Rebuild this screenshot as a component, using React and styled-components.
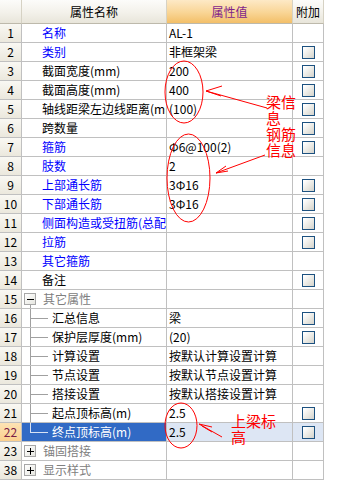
import styled, { createGlobalStyle } from "styled-components";

const GlobalStyle = createGlobalStyle`
  body {
    margin: 0;
    background: #ffffff;
    font-family: "Noto Sans CJK SC", "DejaVu Sans", sans-serif;
  }
`;

const rows = [
  { n: 1, name: "名称", blue: true, value: "AL-1" },
  { n: 2, name: "类别", blue: true, value: "非框架梁", check: true },
  { n: 3, name: "截面宽度(mm)", value: "200", check: true },
  { n: 4, name: "截面高度(mm)", value: "400", check: true },
  { n: 5, name: "轴线距梁左边线距离(mm)", value: "(100)", check: true },
  { n: 6, name: "跨数量", value: "", check: true },
  { n: 7, name: "箍筋", blue: true, value: "Φ6@100(2)", check: true },
  { n: 8, name: "肢数", blue: true, value: "2" },
  { n: 9, name: "上部通长筋", blue: true, value: "3Φ16", check: true },
  { n: 10, name: "下部通长筋", blue: true, value: "3Φ16", check: true },
  { n: 11, name: "侧面构造或受扭筋(总配筋值)", blue: true, value: "", check: true },
  { n: 12, name: "拉筋", blue: true, value: "", check: true },
  { n: 13, name: "其它箍筋", blue: true, value: "" },
  { n: 14, name: "备注", value: "", check: true },
  { n: 15, name: "其它属性", group: "open" },
  { n: 16, name: "汇总信息", child: true, value: "梁", check: true },
  { n: 17, name: "保护层厚度(mm)", child: true, value: "(20)", check: true },
  { n: 18, name: "计算设置", child: true, value: "按默认计算设置计算" },
  { n: 19, name: "节点设置", child: true, value: "按默认节点设置计算" },
  { n: 20, name: "搭接设置", child: true, value: "按默认搭接设置计算" },
  { n: 21, name: "起点顶标高(m)", child: true, value: "2.5", check: true },
  { n: 22, name: "终点顶标高(m)", child: true, last: true, value: "2.5", check: true, active: true },
  { n: 23, name: "锚固搭接", group: "closed" },
  { n: 38, name: "显示样式", group: "closed" },
];

const App = () => {
  return (
    <Page>
      <GlobalStyle />
      <Grid>
        <HeaderRow>
          <HeadCell />
          <HeadCell>属性名称</HeadCell>
          <HeadCell $accent>属性值</HeadCell>
          <HeadCell>附加</HeadCell>
        </HeaderRow>
        {rows.map((r) => (
          <Row key={r.n}>
            <NumCell $active={r.active}>{r.n}</NumCell>
            <NameCell
              $active={r.active}
              $tone={r.group ? "muted" : r.blue ? "blue" : "plain"}
              $indent={r.group ? 2 : r.child ? 8 : 20}
            >
              {r.group && (
                <ToggleWrap $stem={r.group === "open"}>
                  <Toggle $open={r.group === "open"} />
                </ToggleWrap>
              )}
              {r.child && <Branch $last={r.last} $active={r.active} />}
              <Label $gap={r.group ? 7 : r.child ? 4 : 0}>{r.name}</Label>
            </NameCell>
            <ValueCell $active={r.active}>{r.value}</ValueCell>
            <ExtraCell $active={r.active}>{r.check && <Check />}</ExtraCell>
          </Row>
        ))}
      </Grid>

      <Markup viewBox="0 0 339 490" width="339" height="490">
        <g fill="none" stroke="#ff0000" strokeWidth="1">
          <ellipse cx="184" cy="92" rx="19" ry="31" />
          <polyline points="222,86 206,91 221,96" />
          <line x1="206" y1="91" x2="267" y2="108" />

          <ellipse cx="188.5" cy="178" rx="21.5" ry="44" />
          <line x1="265" y1="155" x2="216" y2="173" />
          <polyline points="226,166 216,173 228,171" />

          <ellipse cx="181" cy="425.5" rx="16" ry="22.5" />
          <polyline points="212,427 199,424 222,437" />
          <line x1="202" y1="426" x2="212" y2="432" />
        </g>
      </Markup>

      <Note $x={266} $y={94}>
        梁信
        <br />
        息
        <br />
        钢筋
        <br />
        信息
      </Note>
      <Note $x={231} $y={413}>
        上梁标
        <br />
        高
      </Note>
    </Page>
  );
};

export default App;

const gridLine = "#c0c0c0";

const Page = styled.div`
  position: relative;
  width: 339px;
  height: 490px;
  overflow: hidden;
`;

const Grid = styled.div`
  display: flex;
  flex-direction: column;
  width: 324px;
  font-size: 12px;
`;

const Row = styled.div`
  display: grid;
  grid-template-columns: 22px 145px 126px 31px;
  height: 19px;

  & > * {
    box-sizing: border-box;
    border-right: 1px solid ${gridLine};
    border-bottom: 1px solid ${gridLine};
    line-height: 18px;
    overflow: hidden;
    white-space: nowrap;
  }
`;

const HeaderRow = styled(Row)`
  height: 24px;

  & > * {
    line-height: 23px;
    border-right-color: #d6d2c4;
    border-bottom-color: #bdb9ab;
  }
`;

const HeadCell = styled.div`
  text-align: center;
  color: ${(p) => (p.$accent ? "#7f1f8a" : "#000000")};
  background: ${(p) =>
    p.$accent
      ? "linear-gradient(#fde9c6, #f9d595 55%, #f3bf68)"
      : "linear-gradient(#fcfcfa, #f3f1ea 55%, #e8e5da)"};
`;

const NumCell = styled.div`
  text-align: center;
  color: ${(p) => (p.$active ? "#7a1c46" : "#000000")};
  background: ${(p) =>
    p.$active
      ? "linear-gradient(#fde3b4, #fbd08e)"
      : "linear-gradient(#f9f8f3, #ebe8dd)"};
`;

const toneColors = {
  blue: "#0000ff",
  muted: "#808080",
  plain: "#000000",
};

const NameCell = styled.div`
  display: flex;
  align-items: center;
  padding-left: ${(p) => p.$indent}px;
  color: ${(p) => (p.$active ? "#ffffff" : toneColors[p.$tone])};
  background: ${(p) => (p.$active ? "#316ac5" : "#ffffff")};
`;

const Label = styled.span`
  margin-left: ${(p) => p.$gap}px;
`;

const ToggleWrap = styled.span`
  flex: none;
  align-self: stretch;
  width: 12px;
  display: flex;
  align-items: center;
  justify-content: center;
  background: ${(p) =>
    p.$stem
      ? "linear-gradient(#a0a0a0, #a0a0a0) 6px 100% / 1px 50% no-repeat"
      : "none"};
`;

const Toggle = styled.span`
  box-sizing: border-box;
  width: 12px;
  height: 12px;
  border: 1px solid #a7a7a7;
  background: ${(p) =>
    p.$open
      ? "linear-gradient(#000, #000) center / 7px 1px no-repeat, linear-gradient(135deg, #ffffff, #e6e6e0)"
      : "linear-gradient(#000, #000) center / 7px 1px no-repeat, linear-gradient(#000, #000) center / 1px 7px no-repeat, linear-gradient(135deg, #ffffff, #e6e6e0)"};
`;

const Branch = styled.span`
  flex: none;
  align-self: stretch;
  width: 18px;
  margin-bottom: -1px;
  --c: ${(p) => (p.$active ? "#d8e2f4" : "#a0a0a0")};
  background: linear-gradient(var(--c), var(--c)) 0 0 /
      1px ${(p) => (p.$last ? "9px" : "100%")} no-repeat,
    linear-gradient(var(--c), var(--c)) 0 9px / 100% 1px no-repeat;
`;

const ValueCell = styled.div`
  padding-left: 2px;
  color: #000000;
  background: ${(p) => (p.$active ? "#dde6f4" : "#ffffff")};
`;

const ExtraCell = styled.div`
  display: flex;
  align-items: center;
  justify-content: center;
  background: ${(p) => (p.$active ? "#dde6f4" : "#ffffff")};
`;

const Check = styled.span`
  box-sizing: border-box;
  width: 13px;
  height: 13px;
  border: 1px solid #1c5180;
  background: linear-gradient(135deg, #ffffff 10%, #e8e7e1 60%, #d3d2cb);
`;

const Markup = styled.svg`
  position: absolute;
  left: 0;
  top: 0;
  pointer-events: none;
`;

const Note = styled.div`
  position: absolute;
  left: ${(p) => p.$x}px;
  top: ${(p) => p.$y}px;
  color: #ff0000;
  font-size: 15px;
  line-height: 16px;
  white-space: nowrap;
`;
